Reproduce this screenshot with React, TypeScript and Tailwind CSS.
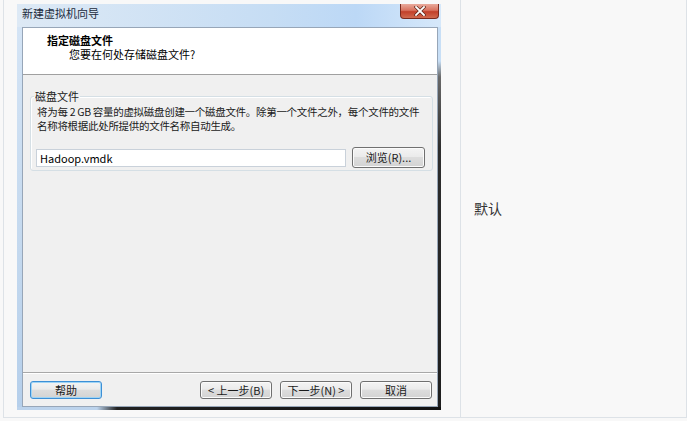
const font = { fontFamily: '"Noto Sans CJK SC", "Liberation Sans", sans-serif' };

function WinButton({ label, focused }: { label: string; focused?: boolean }) {
  return (
    <button
      className={
        "h-[18px] w-[72px] rounded-[3px] border text-[11px] leading-none text-[#1a1a1a] bg-[linear-gradient(to_bottom,#f4f4f4,#ebebeb_45%,#dddddd_50%,#d3d3d3)] " +
        (focused
          ? "border-[#3c8fd6] shadow-[inset_0_0_0_1px_#9fd4f5]"
          : "border-[#707070] shadow-[inset_0_0_0_1px_#fbfbfb]")
      }
    >
      {label}
    </button>
  );
}

function CloseButton() {
  return (
    <div className="ml-auto mr-[2px] self-start w-[39px] h-[15px] rounded-b-[4px] border border-t-0 border-[#7a2a1e] bg-[linear-gradient(to_bottom,#e9aa9c,#d9735f_45%,#c2402a_55%,#d06a4f)] flex items-center justify-center">
      <svg width="12" height="10" viewBox="0 0 12 10">
        <path d="M2 1 L10 9 M10 1 L2 9" stroke="#5a2418" strokeWidth="3.2" strokeLinecap="square" />
        <path d="M2 1 L10 9 M10 1 L2 9" stroke="#ffffff" strokeWidth="1.8" strokeLinecap="square" />
      </svg>
    </div>
  );
}

function WizardWindow() {
  return (
    <div className="w-[424px] h-[406px] flex flex-col" style={font}>
      {/* title bar */}
      <div className="h-[23px] flex bg-[linear-gradient(to_right,#dde9f5,#c6ddf4_60%,#bcd8f6_80%,#d6e8fa)]">
        <span className="pl-[5px] pt-[3px] text-[11px] leading-[12px] text-[#1b2a3c]">新建虚拟机向导</span>
        <CloseButton />
      </div>

      <div className="flex flex-1">
        <div className="w-[5px] bg-[linear-gradient(to_bottom,#d4e4f5,#c3d8ee_60%,#b5cfeb)]" />

        {/* client area */}
        <div className="w-[416px] flex flex-col bg-[#f0f0f0] border border-[#97a6b8]">
          <div className="h-[47px] bg-white border-b border-[#a0a0a0] pt-[5px] pl-[24px] text-[11px] leading-[14px] text-black">
            <div className="font-bold">指定磁盘文件</div>
            <div className="pl-[22px]">您要在何处存储磁盘文件?</div>
          </div>

          <div className="flex-1 pl-[7px] pr-[5px] pt-[14px]">
            <fieldset className="border border-[#d5dfe5] rounded-[3px] pl-[6px] pr-[7px] pb-[2px] shadow-[inset_1px_1px_0_#ffffff]">
              <legend className="ml-[-3px] px-[1px] text-[11px] leading-[14px] text-[#1a1a1a]">磁盘文件</legend>
              <div className="mt-[2px] text-[10.5px] leading-[14px] text-[#1a1a1a] whitespace-nowrap tracking-[-0.3px]">
                <div>将为每 2 GB 容量的虚拟磁盘创建一个磁盘文件。除第一个文件之外，每个文件的文件</div>
                <div>名称将根据此处所提供的文件名称自动生成。</div>
              </div>
              <div className="mt-[14px] flex items-center">
                <div className="ml-[-1px] w-[310px] h-[18px] bg-white border border-[#c9d1da] pl-[3px] text-[11px] leading-[16px] text-black">
                  Hadoop.vmdk
                </div>
                <button className="ml-[6px] w-[73px] h-[21px] rounded-[3px] border border-[#707070] shadow-[inset_0_0_0_1px_#fbfbfb] bg-[linear-gradient(to_bottom,#f4f4f4,#ebebeb_45%,#dddddd_50%,#d3d3d3)] text-[11px] leading-none text-[#1a1a1a]">
                  浏览(R)...
                </button>
              </div>
            </fieldset>
          </div>

          <div className="h-[34px] border-t border-[#a8a8a8] shadow-[inset_0_1px_0_#ffffff] pt-[8px] pl-[7px] flex">
            <WinButton label="帮助" focused />
            <div className="ml-auto mr-[5px] flex gap-[8px]">
              <WinButton label="< 上一步(B)" />
              <WinButton label="下一步(N) >" />
              <WinButton label="取消" />
            </div>
          </div>
        </div>

        <div className="w-[3px] bg-[linear-gradient(to_bottom,#c8dff6,#c8dff6_34px,#6a6a6a_50px,#2e2e2e_120px,#1e1e1e)]" />
      </div>

      <div className="h-[3px] bg-[linear-gradient(to_right,#bcd3ec,#bcd3ec_80px,#222222_100px,#111111)]" />
    </div>
  );
}

export default function App() {
  return (
    <div className="w-[687px] h-[421px] bg-[#f8f8f8] pl-[3px]">
      <div className="w-[684px] h-[418px] flex border-l border-r border-b border-[#dde2e7]">
        <div className="w-[457px] border-r border-[#dde2e7] pl-[13px] pt-[4px]">
          <WizardWindow />
        </div>
        <div
          className="flex-1 flex items-center pl-[13px] text-[14px] text-[#333333]"
          style={{ fontFamily: '"Noto Sans CJK SC", "Liberation Sans", sans-serif' }}
        >
          默认
        </div>
      </div>
    </div>
  );
}
